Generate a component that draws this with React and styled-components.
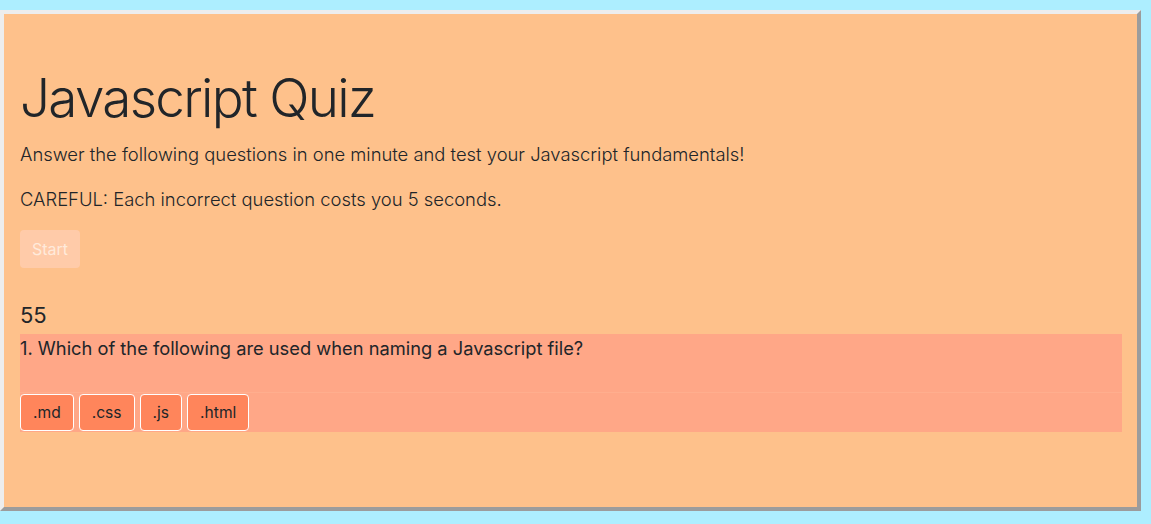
import React from "react";
import styled, { createGlobalStyle } from "styled-components";

const GlobalStyle = createGlobalStyle`
  body {
    margin: 0;
    background: #adeeff;
    font-family: Inter, "Noto Sans", sans-serif;
    color: #212529;
  }
`;

const Page = styled.div`
  padding: 10px 10px 12px 0;
`;

const Jumbo = styled.div`
  background: #fec18b;
  border: 4px solid;
  border-color: #ededed #9c9c9c #9c9c9c #ededed;
  padding: 52px 15px 75px 16px;
`;

const Title = styled.h1`
  font-size: 53px;
  font-weight: 300;
  line-height: 64px;
  margin: 0 0 10px;
  letter-spacing: -1.7px;
`;

const Lead = styled.p`
  font-size: 18.4px;
  font-weight: 300;
  line-height: 29px;
  margin: 0 0 16px;
`;

const StartButton = styled.button`
  display: block;
  font-family: inherit;
  font-size: 16px;
  line-height: 24px;
  padding: 7px 12px;
  border: none;
  border-radius: 4px;
  background: #ffcba9;
  color: #ffeadb;
`;

const Timer = styled.div`
  font-size: 22px;
  line-height: 26px;
  margin-top: 34px;
  margin-bottom: 6px;
`;

const Block = styled.div`
  background: #ffa787;
`;

const Question = styled(Block)`
  font-size: 18.3px;
  line-height: 28px;
  height: 59px;
  box-sizing: border-box;
  border-bottom: 1px solid #ffae8e;
`;

const Answers = styled(Block)`
  display: flex;
  gap: 5px;
  padding: 1px 0;
`;

const Answer = styled.button`
  font-family: inherit;
  font-size: 15.6px;
  line-height: 24px;
  padding: 5.5px 12px;
  background: #ff855b;
  color: #212529;
  border: 1px solid #ffffff;
  border-radius: 4px;
`;

const choices = [".md", ".css", ".js", ".html"];

export default function App() {
  return (
    <Page>
      <GlobalStyle />
      <Jumbo>
        <Title>Javascript Quiz</Title>
        <Lead>
          Answer the following questions in one minute and test your Javascript fundamentals!
        </Lead>
        <Lead>CAREFUL: Each incorrect question costs you 5 seconds.</Lead>
        <StartButton disabled>Start</StartButton>
        <Timer>55</Timer>
        <Question>1. Which of the following are used when naming a Javascript file?</Question>
        <Answers>
          {choices.map((c) => (
            <Answer key={c}>{c}</Answer>
          ))}
        </Answers>
      </Jumbo>
    </Page>
  );
}
